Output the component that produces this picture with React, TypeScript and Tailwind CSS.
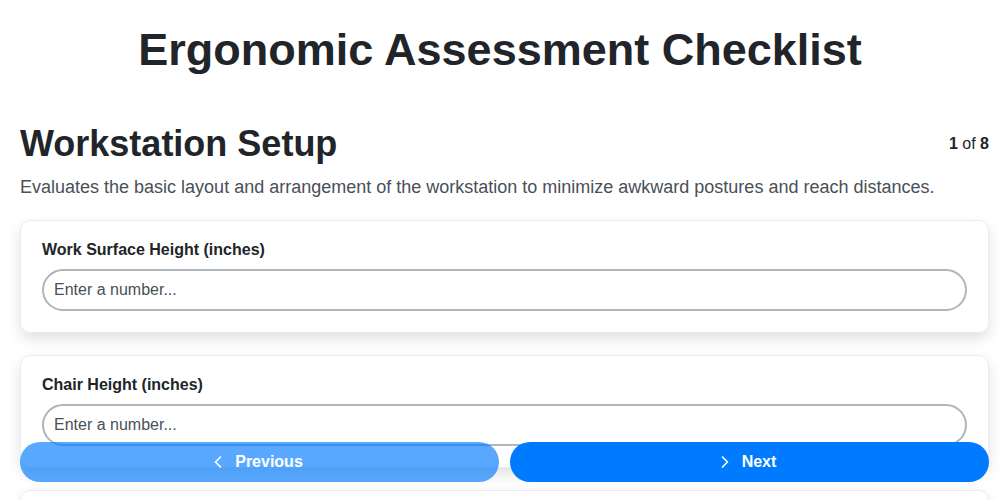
import { ChevronLeft, ChevronRight } from "lucide-react";

const questions = [
  "Work Surface Height (inches)",
  "Chair Height (inches)",
  "Monitor Distance (inches)",
  "Keyboard Height (inches)",
];

export default function App() {
  return (
    <div className="relative h-screen overflow-hidden bg-white font-['Liberation_Sans',Arial,sans-serif] text-[#212529]">
      <h1 className="pt-[23px] text-center text-[45px] font-bold leading-[54px]">
        Ergonomic Assessment Checklist
      </h1>

      <div className="pl-5 pr-[11px]">
        <div className="mt-[45px] flex items-center justify-between">
          <h2 className="text-[36px] font-bold leading-[44px]">Workstation Setup</h2>
          <p className="text-[16px] leading-[18px]">
            <span className="font-bold">1</span> of <span className="font-bold">8</span>
          </p>
        </div>

        <p className="mt-[10px] text-[18px] leading-[22px] text-[#495057]">
          Evaluates the basic layout and arrangement of the workstation to minimize awkward
          postures and reach distances.
        </p>

        <div className="mt-[22px] flex flex-col gap-[22px]">
          {questions.map((q) => (
            <div
              key={q}
              className="rounded-[10px] border border-[#e9ecef] bg-white px-[21px] pt-[20px] pb-[21px] shadow-[0_6px_14px_rgba(0,0,0,0.12)]"
            >
              <label className="block text-[16px] font-bold leading-[18px]">{q}</label>
              <input
                type="text"
                placeholder="Enter a number..."
                className="mt-[10px] block h-[42px] w-full rounded-full border-2 border-[#adb5bd] bg-white px-[10px] text-[16px] text-[#212529] outline-none placeholder:text-[#495057]"
              />
            </div>
          ))}
        </div>
      </div>

      {/* Floating pager */}
      <div className="absolute bottom-[18px] left-5 right-[11px] flex gap-[11px]">
        <button className="flex h-[40px] flex-1 items-center justify-center gap-[7px] rounded-full bg-[#007bff] pr-[8px] text-[16px] font-bold text-white opacity-65">
          <ChevronLeft size={20} strokeWidth={2} />
          Previous
        </button>
        <button className="flex h-[40px] flex-1 items-center justify-center gap-[7px] rounded-full bg-[#007bff] pr-[8px] text-[16px] font-bold text-white">
          <ChevronRight size={20} strokeWidth={2} />
          Next
        </button>
      </div>
    </div>
  );
}
